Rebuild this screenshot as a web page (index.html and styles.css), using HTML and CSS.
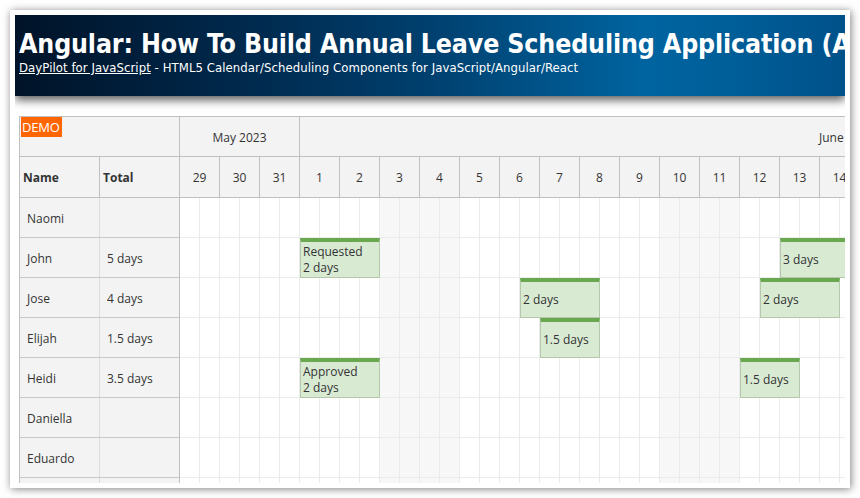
FILE: index.html
```
<!DOCTYPE html>
<html>
<head>
<meta charset="utf-8">
<title>Annual Leave Scheduling</title>
<link rel="stylesheet" href="styles.css">
</head>
<body>
<div class="frame">
  <div class="viewport">
    <header class="hdr">
      <h1 class="title">Angular: How To Build Annual Leave Scheduling Application (Angular, PHP)</h1>
      <div class="sub"><a class="sub-link" href="#">DayPilot for JavaScript</a> - HTML5 Calendar/Scheduling Components for JavaScript/Angular/React</div>
    </header>
    <main class="content">
      <div class="scheduler">
        <div class="rowheaders">
          <div class="corner"><span class="demo">DEMO</span></div>
          <div class="colheads">
            <div class="colhead c-name">Name</div>
            <div class="colhead c-total">Total</div>
          </div>
          <div class="rh-row"><div class="rh-cell c-name">Naomi</div><div class="rh-cell c-total"></div></div>
          <div class="rh-row"><div class="rh-cell c-name">John</div><div class="rh-cell c-total">5 days</div></div>
          <div class="rh-row"><div class="rh-cell c-name">Jose</div><div class="rh-cell c-total">4 days</div></div>
          <div class="rh-row"><div class="rh-cell c-name">Elijah</div><div class="rh-cell c-total">1.5 days</div></div>
          <div class="rh-row"><div class="rh-cell c-name">Heidi</div><div class="rh-cell c-total">3.5 days</div></div>
          <div class="rh-row"><div class="rh-cell c-name">Daniella</div><div class="rh-cell c-total"></div></div>
          <div class="rh-row"><div class="rh-cell c-name">Eduardo</div><div class="rh-cell c-total"></div></div>
          <div class="rh-row"><div class="rh-cell c-name"></div><div class="rh-cell c-total"></div></div>
        </div>
        <div class="timeline">
          <div class="months">
            <div class="month m-may">May 2023</div>
            <div class="month m-june">June 2023</div>
          </div>
          <div class="days">
            <div class="day">29</div><div class="day">30</div><div class="day">31</div>
            <div class="day">1</div><div class="day">2</div><div class="day">3</div><div class="day">4</div>
            <div class="day">5</div><div class="day">6</div><div class="day">7</div><div class="day">8</div>
            <div class="day">9</div><div class="day">10</div><div class="day">11</div><div class="day">12</div>
            <div class="day">13</div><div class="day">14</div>
          </div>
          <div class="grid">
            <div class="g-row"></div>
            <div class="g-row">
              <div class="ev" style="left:120px;width:80px"><span>Requested<br>2 days</span></div>
              <div class="ev" style="left:600px;width:120px"><span>3 days</span></div>
            </div>
            <div class="g-row">
              <div class="ev" style="left:340px;width:80px"><span>2 days</span></div>
              <div class="ev" style="left:580px;width:80px"><span>2 days</span></div>
            </div>
            <div class="g-row">
              <div class="ev" style="left:360px;width:60px"><span>1.5 days</span></div>
            </div>
            <div class="g-row">
              <div class="ev" style="left:120px;width:80px"><span>Approved<br>2 days</span></div>
              <div class="ev" style="left:560px;width:60px"><span>1.5 days</span></div>
            </div>
            <div class="g-row"></div>
            <div class="g-row"></div>
            <div class="g-row"></div>
          </div>
        </div>
      </div>
    </main>
  </div>
</div>
</body>
</html>
```

FILE: styles.css
```
* { box-sizing: border-box; }
html, body { margin: 0; padding: 0; background: #fff; }
body { width: 860px; height: 498px; overflow: hidden; }

.frame {
  margin: 10px 0 0 10px;
  width: 840px;
  height: 478px;
  padding: 5px;
  background: #fff;
  box-shadow: 1px 1px 8px rgba(0,0,0,0.5);
}
.viewport {
  width: 830px;
  height: 468px;
  overflow: hidden;
  position: relative;
}

.hdr {
  height: 81px;
  padding: 15px 0 0 4px;
  background: linear-gradient(to right, #001328 0%, #002b50 30%, #00406f 50%, #0064a0 76%, #005e98 86%, #00518a 100%);
  box-shadow: 0 4px 9px rgba(0,0,0,0.65);
  color: #fff;
  position: relative;
  z-index: 2;
  white-space: nowrap;
  overflow: hidden;
}
.title {
  margin: 0;
  font-family: "DejaVu Sans Condensed", "DejaVu Sans", sans-serif;
  font-stretch: condensed;
  font-weight: bold;
  font-size: 26.5px;
  letter-spacing: -0.15px;
  line-height: 27px;
}
.sub {
  margin-top: 3px;
  font-family: "DejaVu Sans Condensed", "DejaVu Sans", sans-serif;
  font-stretch: condensed;
  font-size: 13px;
  letter-spacing: 0.07px;
  line-height: 16px;
}
.sub-link { color: #fff; text-decoration: underline; }

.content {
  padding: 20px 0 0 4px;
  font-family: "Open Sans", "Noto Sans", sans-serif;
  font-size: 12px;
  color: #333;
}

.scheduler {
  display: flex;
  width: 900px;
  border-top: 1px solid #c0c0c0;
  border-left: 1px solid #c0c0c0;
}

.rowheaders {
  width: 160px;
  flex: none;
  background: #f3f3f3;
  border-right: 1px solid #c0c0c0;
}
.corner {
  height: 40px;
  border-bottom: 1px solid #c0c0c0;
  position: relative;
}
.demo {
  position: absolute;
  left: 1px;
  top: 0;
  width: 41px;
  height: 20px;
  background: #ff6600;
  color: #fff;
  font-size: 13px;
  line-height: 20px;
  padding-left: 1px;
  letter-spacing: -0.2px;
}
.colheads {
  display: flex;
  height: 41px;
  border-bottom: 1px solid #c0c0c0;
}
.colhead {
  display: flex;
  align-items: center;
  padding-left: 3px;
  font-weight: bold;
}
.c-name { width: 80px; }
.c-total { width: 79px; }
.colhead.c-name { border-right: 1px solid #c0c0c0; }
.rh-row {
  display: flex;
  height: 40px;
  border-bottom: 1px solid #c8c8c8;
}
.rh-cell {
  display: flex;
  align-items: center;
  padding: 2px 0 0 7px;
}
.rh-cell.c-name { border-right: 1px solid #dcdcdc; }

.timeline {
  flex: none;
  width: 666px;
  overflow: hidden;
}
.months {
  display: flex;
  height: 40px;
  border-bottom: 1px solid #c0c0c0;
  background: #f3f3f3;
}
.month {
  display: flex;
  align-items: center;
  border-right: 1px solid #c0c0c0;
  flex: none;
  padding-top: 2px;
}
.m-may { width: 120px; justify-content: center; }
.m-june { width: 1200px; padding-left: 519px; }

.days {
  display: flex;
  height: 41px;
  border-bottom: 1px solid #c0c0c0;
  background: #f3f3f3;
}
.day {
  flex: none;
  width: 40px;
  border-right: 1px solid #c0c0c0;
  display: flex;
  align-items: center;
  justify-content: center;
}

.g-row {
  position: relative;
  width: 720px;
  height: 40px;
  border-bottom: 1px solid #ebebeb;
  background-color: #fff;
  background-image:
    linear-gradient(to right, transparent 19px, #ebebeb 19px, #ebebeb 20px, transparent 20px),
    linear-gradient(to right, transparent 200px, #f7f7f7 200px, #f7f7f7 280px, transparent 280px, transparent 480px, #f7f7f7 480px, #f7f7f7 560px, transparent 560px);
  background-size: 20px 100%, 100% 100%;
  background-repeat: repeat-x, no-repeat;
}

.ev {
  position: absolute;
  top: 0;
  height: 40px;
  background: #d9ead3;
  border: 1px solid #b5c8ab;
  border-top: 4px solid #6aa84f;
  display: flex;
  align-items: center;
  padding-left: 2px;
  line-height: 16px;
  color: #333;
  white-space: nowrap;
  overflow: hidden;
}
```
